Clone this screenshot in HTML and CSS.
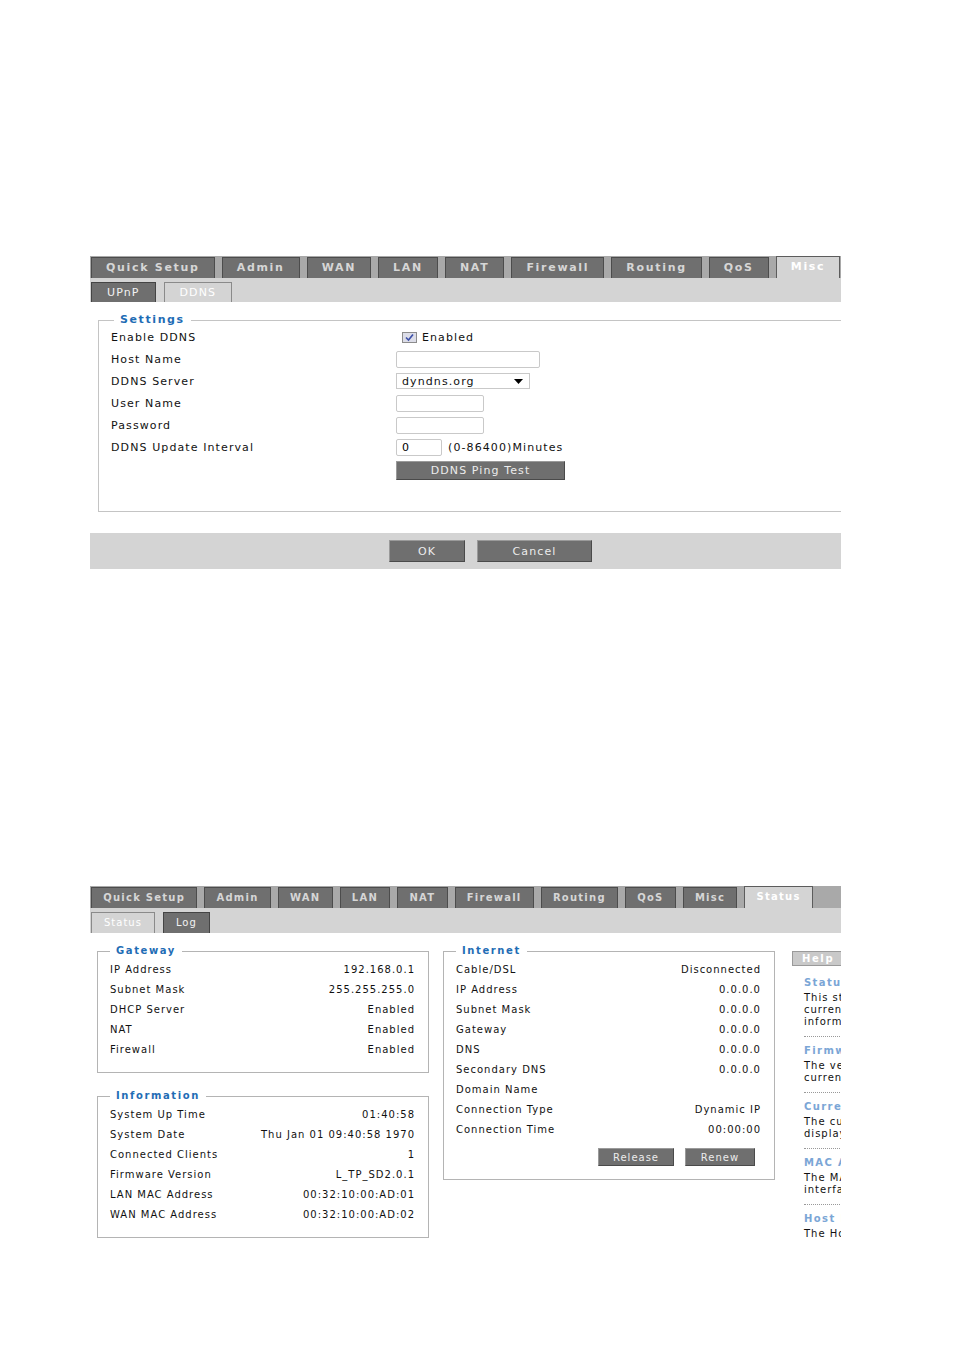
FILE: index.html
```html
<!DOCTYPE html>
<html lang="en">
<head>
    <meta charset="UTF-8">
    <title>Router - DDNS / Status</title>
    <link rel="stylesheet" href="styles.css">
</head>
<body>
    <div class="shot ddns">
        <div class="tabs">
            <span class="tab">Quick Setup</span>
            <span class="tab">Admin</span>
            <span class="tab">WAN</span>
            <span class="tab">LAN</span>
            <span class="tab">NAT</span>
            <span class="tab">Firewall</span>
            <span class="tab">Routing</span>
            <span class="tab">QoS</span>
            <span class="tab on">Misc</span>
        </div>
        <div class="subtabs">
            <span class="subtab">UPnP</span>
            <span class="subtab on">DDNS</span>
        </div>

        <fieldset class="box wide">
            <legend>Settings</legend>
            <div class="row">
                <span class="lbl">Enable DDNS</span>
                <span class="check"><svg width="13" height="9" viewBox="0 0 13 9"><path d="M3 4.5 L5.5 7 L10 1.5" fill="none" stroke="#3b4fa8" stroke-width="1.6"/></svg></span>
                <span class="check-text">Enabled</span>
            </div>
            <div class="row">
                <span class="lbl">Host Name</span>
                <input class="txt long" type="text">
            </div>
            <div class="row">
                <span class="lbl">DDNS Server</span>
                <div class="select">
                    <span>dyndns.org</span>
                    <svg width="9" height="5" viewBox="0 0 9 5"><path d="M0 0 H9 L4.5 5 Z" fill="#000"/></svg>
                </div>
            </div>
            <div class="row">
                <span class="lbl">User Name</span>
                <input class="txt mid" type="text">
            </div>
            <div class="row">
                <span class="lbl">Password</span>
                <input class="txt mid" type="password">
            </div>
            <div class="row">
                <span class="lbl">DDNS Update Interval</span>
                <input class="txt short" type="text" value="0">
                <span class="unit">(0-86400)Minutes</span>
            </div>
            <div class="row">
                <span class="lbl"></span>
                <button class="btn ping">DDNS Ping Test</button>
            </div>
        </fieldset>

        <div class="actions">
            <button class="btn ok">OK</button>
            <button class="btn cancel">Cancel</button>
        </div>
    </div>

    <div class="shot status">
        <div class="tabs">
            <span class="tab">Quick Setup</span>
            <span class="tab">Admin</span>
            <span class="tab">WAN</span>
            <span class="tab">LAN</span>
            <span class="tab">NAT</span>
            <span class="tab">Firewall</span>
            <span class="tab">Routing</span>
            <span class="tab">QoS</span>
            <span class="tab">Misc</span>
            <span class="tab on">Status</span>
        </div>
        <div class="subtabs">
            <span class="subtab on">Status</span>
            <span class="subtab">Log</span>
        </div>

        <div class="cols">
            <div class="col">
                <fieldset class="box">
                    <legend>Gateway</legend>
                    <div class="line"><span>IP Address</span><span>192.168.0.1</span></div>
                    <div class="line"><span>Subnet Mask</span><span>255.255.255.0</span></div>
                    <div class="line"><span>DHCP Server</span><span>Enabled</span></div>
                    <div class="line"><span>NAT</span><span>Enabled</span></div>
                    <div class="line"><span>Firewall</span><span>Enabled</span></div>
                </fieldset>
                <fieldset class="box">
                    <legend>Information</legend>
                    <div class="line"><span>System Up Time</span><span>01:40:58</span></div>
                    <div class="line"><span>System Date</span><span>Thu Jan 01 09:40:58 1970</span></div>
                    <div class="line"><span>Connected Clients</span><span>1</span></div>
                    <div class="line"><span>Firmware Version</span><span>L_TP_SD2.0.1</span></div>
                    <div class="line"><span>LAN MAC Address</span><span>00:32:10:00:AD:01</span></div>
                    <div class="line"><span>WAN MAC Address</span><span>00:32:10:00:AD:02</span></div>
                </fieldset>
            </div>

            <div class="col">
                <fieldset class="box">
                    <legend>Internet</legend>
                    <div class="line"><span>Cable/DSL</span><span>Disconnected</span></div>
                    <div class="line"><span>IP Address</span><span>0.0.0.0</span></div>
                    <div class="line"><span>Subnet Mask</span><span>0.0.0.0</span></div>
                    <div class="line"><span>Gateway</span><span>0.0.0.0</span></div>
                    <div class="line"><span>DNS</span><span>0.0.0.0</span></div>
                    <div class="line"><span>Secondary DNS</span><span>0.0.0.0</span></div>
                    <div class="line"><span>Domain Name</span><span></span></div>
                    <div class="line"><span>Connection Type</span><span>Dynamic IP</span></div>
                    <div class="line"><span>Connection Time</span><span>00:00:00</span></div>
                    <div class="btnrow">
                        <button class="btn release">Release</button>
                        <button class="btn renew">Renew</button>
                    </div>
                </fieldset>
            </div>

            <div class="help">
                <div class="help-head">Help</div>
                <div class="help-body">
                    <h4>Status</h4>
                    <p>This status page displays the<br>current status and configuration<br>information of the router.</p>
                    <div class="sep"></div>
                    <h4>Firmware Version</h4>
                    <p>The version of the firmware<br>currently installed.</p>
                    <div class="sep"></div>
                    <h4>Current Time</h4>
                    <p>The current time is<br>displayed here.</p>
                    <div class="sep"></div>
                    <h4>MAC Address</h4>
                    <p>The MAC address of the<br>interface.</p>
                    <div class="sep"></div>
                    <h4>Host Name</h4>
                    <p>The Host Name of the router.</p>
                </div>
            </div>
        </div>
    </div>
</body>
</html>
```

FILE: styles.css
```css
body { margin: 0; font-family: "DejaVu Sans", Verdana, sans-serif; color: #111; background: #fff; }

.shot { width: 751px; margin-left: 90px; overflow: hidden; }
.ddns { margin-top: 256px; font-size: 11px; letter-spacing: 1.1px; }
.status { margin-top: 317px; font-size: 10px; letter-spacing: 1px; }

/* tab rows */
.tabs { display: flex; align-items: flex-end; height: 22px; padding-left: 1px; background: #a9a9a9; }
.tab { height: 21px; box-sizing: border-box; padding: 0 14px; margin-right: 7px; background: #6f6f6f; border: 1px solid #4c4c4c; border-bottom: 0; color: #d6d6d6; font-weight: bold; letter-spacing: 1.7px; line-height: 20px; white-space: nowrap; }
.tab.on { height: 22px; background: #d4d4d4; border-color: #5c5c5c; color: #fff; }
.status .tab { padding: 0 11.2px; letter-spacing: 1.25px; }

.subtabs { display: flex; align-items: flex-end; height: 24px; padding-left: 1px; background: #d4d4d4; }
.subtab { height: 20px; box-sizing: border-box; padding: 0 15px; margin-right: 8px; background: #6f6f6f; border: 1px solid #444; border-bottom: 0; color: #f2f2f2; line-height: 19px; }
.subtab.on { background: #d4d4d4; border-color: #8a8a8a; color: #fff; }
.status .subtabs { height: 25px; }
.status .subtab { height: 21px; padding: 0 12px; line-height: 20px; }

/* group boxes */
.box { margin: 0; padding: 2px 13px 13px 12px; border: 1px solid #b4b4b4; min-width: 0; }
.box legend { padding: 0 6px; color: #1f6db5; font-weight: bold; letter-spacing: 1.6px; line-height: 12px; }
.wide { width: 800px; margin: 12px 0 0 8px; padding: 0 12px 31px; border-color: #c4c4c4; }
.wide legend { margin-left: 3px; }

.row { display: flex; align-items: center; height: 22px; }
.lbl { width: 285px; flex: none; }

.txt { height: 17px; box-sizing: border-box; border: 1px solid #c9c9c9; border-radius: 2px; padding: 0 5px; font: inherit; letter-spacing: inherit; background: #fff; }
.long { width: 144px; }
.mid { width: 88px; }
.short { width: 46px; }
.unit { margin-left: 6px; }

.check { width: 15px; height: 11px; box-sizing: border-box; margin-left: 6px; border: 1px solid #8c8c8c; background: #dcdde8; display: flex; align-items: center; justify-content: center; }
.check-text { margin-left: 5px; }

.select { width: 134px; height: 16px; box-sizing: border-box; border: 1px solid #c9c9c9; padding: 0 6px 0 5px; display: flex; justify-content: space-between; align-items: center; }

.btn { box-sizing: border-box; background: #6f6f6f; color: #ececec; border: 1px solid; border-color: #9a9a9a #4a4a4a #4a4a4a #9a9a9a; font: inherit; letter-spacing: inherit; padding: 0; }
.ping { width: 169px; height: 19px; margin-top: 3px; }

.actions { display: flex; align-items: center; gap: 12px; height: 36px; margin-top: 21px; padding-left: 299px; background: #d4d4d4; }
.ok { width: 76px; height: 22px; }
.cancel { width: 115px; height: 22px; }

/* status page */
.cols { display: flex; align-items: flex-start; gap: 14px; margin-top: 12px; padding-left: 7px; }
.col { width: 332px; flex: none; display: flex; flex-direction: column; gap: 17px; }
.line { display: flex; justify-content: space-between; align-items: center; height: 20px; }
.btnrow { display: flex; justify-content: flex-end; gap: 11px; margin-top: 9px; padding-right: 6px; }
.release { width: 76px; height: 18px; }
.renew { width: 70px; height: 18px; }
.col .box:has(.btnrow) { padding-bottom: 13px; }

.help { width: 160px; flex: none; margin-left: 3px; margin-top: 6px; }
.help-head { height: 15px; box-sizing: border-box; padding-left: 9px; background: #c9c9c9; border: 1px solid #9a9a9a; color: #fff; font-weight: bold; letter-spacing: 1.6px; line-height: 13px; }
.help-body { padding: 11px 0 0 12px; white-space: nowrap; }
.help h4 { margin: 0; font-size: 10px; line-height: 12px; color: #7ba6d6; letter-spacing: 1.4px; }
.help p { margin: 3px 0 0; line-height: 12px; }
.sep { width: 36px; margin: 8px 0; border-top: 1px dotted #999; }
```
